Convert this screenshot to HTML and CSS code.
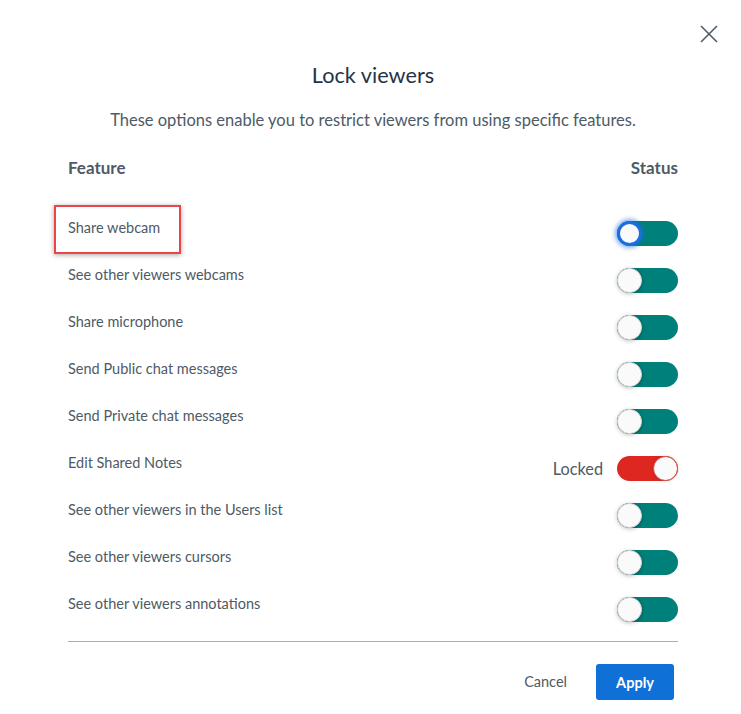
FILE: index.html
```html
<!DOCTYPE html>
<html>
<head>
<meta charset="utf-8">
<link rel="stylesheet" href="styles.css">
</head>
<body>
<div class="modal">
  <button class="close" aria-label="Close">
    <svg width="20" height="20" viewBox="0 0 20 20"><path d="M2 2 L18 18 M18 2 L2 18" stroke="#4f5b68" stroke-width="1.6" fill="none"/></svg>
  </button>
  <h1 class="title">Lock viewers</h1>
  <p class="subtitle">These options enable you to restrict viewers from using specific features.</p>
  <div class="head">
    <span>Feature</span>
    <span>Status</span>
  </div>
  <div class="rows">
    <div class="row"><span class="label focus">Share webcam</span><span class="status"><span class="toggle ring"><span class="knob"></span></span></span></div>
    <div class="row"><span class="label">See other viewers webcams</span><span class="status"><span class="toggle"><span class="knob"></span></span></span></div>
    <div class="row"><span class="label">Share microphone</span><span class="status"><span class="toggle"><span class="knob"></span></span></span></div>
    <div class="row"><span class="label">Send Public chat messages</span><span class="status"><span class="toggle"><span class="knob"></span></span></span></div>
    <div class="row"><span class="label">Send Private chat messages</span><span class="status"><span class="toggle"><span class="knob"></span></span></span></div>
    <div class="row"><span class="label">Edit Shared Notes</span><span class="status"><span class="locked">Locked</span><span class="toggle on"><span class="knob"></span></span></span></div>
    <div class="row"><span class="label">See other viewers in the Users list</span><span class="status"><span class="toggle"><span class="knob"></span></span></span></div>
    <div class="row"><span class="label">See other viewers cursors</span><span class="status"><span class="toggle"><span class="knob"></span></span></span></div>
    <div class="row"><span class="label">See other viewers annotations</span><span class="status"><span class="toggle"><span class="knob"></span></span></span></div>
  </div>
  <div class="footer">
    <button class="cancel">Cancel</button>
    <button class="apply">Apply</button>
  </div>
</div>
</body>
</html>
```
FILE: styles.css
```css
* { box-sizing: border-box; }
html, body { margin: 0; padding: 0; background: #fff; }
body { font-family: Lato, "Open Sans", sans-serif; color: #4e5a66; }
.modal {
  position: relative;
  width: 741px;
  height: 714px;
  padding: 0 63px 0 68px;
}
.close {
  position: absolute;
  top: 24px;
  left: 699px;
  width: 20px;
  height: 20px;
  padding: 0;
  border: 0;
  background: none;
}
.close svg { display: block; }
.title {
  margin: 0;
  padding-top: 62px;
  font-size: 21.7px;
  line-height: 26px;
  font-weight: 400;
  color: #243446;
  text-align: center;
}
.subtitle {
  margin: 22px 0 0;
  font-size: 16.5px;
  line-height: 20px;
  text-align: center;
  color: #4e5a66;
}
.head {
  display: flex;
  justify-content: space-between;
  margin-top: 28px;
  font-size: 17px;
  line-height: 20px;
  font-weight: 700;
  color: #4e5a66;
}
.rows { margin-top: 40px; }
.row {
  display: flex;
  justify-content: space-between;
  align-items: flex-start;
  height: 47px;
}
.label {
  font-size: 14.5px;
  line-height: 20px;
  color: #4e5a66;
  position: relative;
}
.label.focus::after {
  content: "";
  position: absolute;
  left: -14px;
  top: -13px;
  width: 123px;
  height: 45px;
  border: 2px solid #ec4548;
  box-shadow: 0 1px 5px rgba(0,0,0,0.35);
}
.status {
  display: flex;
  align-items: center;
  gap: 14px;
  margin-top: 3px;
}
.locked { font-size: 16.3px; line-height: 20px; color: #4e5a66; }
.toggle {
  position: relative;
  display: block;
  width: 61px;
  height: 25px;
  border-radius: 13px;
  background: linear-gradient(90deg, #0c6f6b 0%, #00807a 45%, #00807a 100%);
}
.knob {
  position: absolute;
  top: 0;
  left: 0;
  width: 25px;
  height: 25px;
  border-radius: 50%;
  background: #fafafa;
  border: 1px solid #d6d6d6;
  box-shadow: 0 1px 4px rgba(0,0,0,0.25);
}
.toggle.ring .knob {
  border: 3px solid #1b6fe0;
  box-shadow: 0 0 4px 2px rgba(27,111,224,0.55);
}
.toggle.on {
  background: #df2721;
}
.toggle.on .knob {
  left: auto;
  right: 0;
  border: 1px solid #d94a45;
  box-shadow: 0 0 3px rgba(0,0,0,0.2);
}
.footer {
  border-top: 1px solid #a7adb4;
  display: flex;
  justify-content: flex-end;
  align-items: center;
  gap: 0;
  padding: 22px 4px 0 0;
}
.cancel, .apply {
  font-family: Lato, "Open Sans", sans-serif;
  font-size: 14.5px;
  border: 0;
  cursor: pointer;
}
.cancel {
  background: none;
  color: #4e5a66;
  padding: 0;
  margin-right: 29px;
  line-height: 36px;
}
.apply {
  width: 78px;
  height: 36px;
  background: #0f70d7;
  color: #fff;
  font-weight: 700;
  border-radius: 3px;
}
```
